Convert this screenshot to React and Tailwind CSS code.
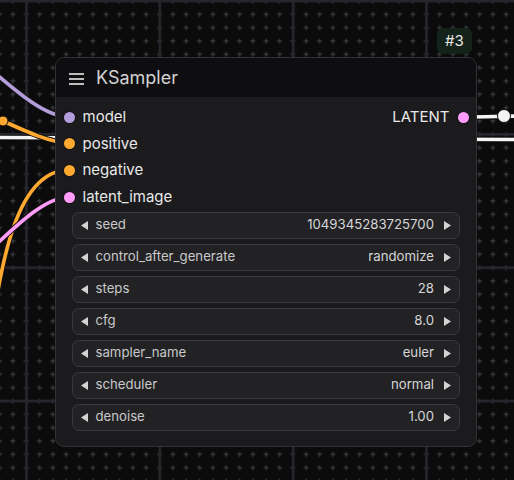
import React from 'react'

const INPUTS = [
  { name: 'model', color: 'bg-[#b39ddb]' },
  { name: 'positive', color: 'bg-[#ffa931]' },
  { name: 'negative', color: 'bg-[#ffa931]' },
  { name: 'latent_image', color: 'bg-[#ff9cf9]' },
]

const WIDGETS = [
  { label: 'seed', value: '1049345283725700' },
  { label: 'control_after_generate', value: 'randomize' },
  { label: 'steps', value: '28' },
  { label: 'cfg', value: '8.0' },
  { label: 'sampler_name', value: 'euler' },
  { label: 'scheduler', value: 'normal' },
  { label: 'denoise', value: '1.00' },
]

function Wire({ d, color }) {
  return (
    <g>
      <path d={d} fill="none" stroke="#111" strokeWidth="5.5" strokeLinecap="round" />
      <path d={d} fill="none" stroke={color} strokeWidth="3.6" strokeLinecap="round" />
    </g>
  )
}

function Canvas() {
  return (
    <svg className="absolute inset-0 h-full w-full" viewBox="0 0 514 480">
      <defs>
        <pattern id="dots" patternUnits="userSpaceOnUse" width="13.333" height="13.333" x="6.17" y="7.67">
          <path d="M6.67 4.17v5M4.17 6.67h5" stroke="#44464c" strokeWidth="1" />
        </pattern>
        <pattern id="grid" patternUnits="userSpaceOnUse" width="133.333" height="133.333" x="25.2" y="-0.3">
          <rect x="0" y="0" width="2.6" height="133.333" fill="#25272c" />
          <rect x="0" y="0" width="133.333" height="2.6" fill="#25272c" />
        </pattern>
      </defs>
      <rect width="514" height="480" fill="#0b0b0c" />
      <rect width="514" height="480" fill="url(#dots)" />
      <rect width="514" height="480" fill="url(#grid)" />

      <Wire d="M0 137.5 L514 139.5" color="#f4f4f4" />
      <Wire d="M-90 20 C-43.5 20 22.5 117 69 117" color="#b39ddb" />
      <Wire d="M-63 99 C-28 99 34 143 69 143" color="#ffa931" />
      <circle cx="3" cy="121" r="5" fill="#ffa931" stroke="#111" strokeWidth="1" />
      <Wire d="M-100 600 C15 600 -46 170 69 170" color="#ffa931" />
      <Wire d="M-80 295 C-36 295 25 197 69 197" color="#ff9cf9" />
      <Wire d="M463 117 C490 117 500 116 530 116" color="#f4f4f4" />
      <circle cx="504" cy="116" r="6.5" fill="#f4f4f4" stroke="#111" strokeWidth="1" />
    </svg>
  )
}

function Arrow({ dir }) {
  return (
    <svg width="7" height="9" viewBox="0 0 7 9" className="shrink-0">
      <polygon points={dir === 'left' ? '7,0 7,9 0,4.5' : '0,0 0,9 7,4.5'} fill="#d4d4d4" />
    </svg>
  )
}

function Widget({ label, value }) {
  return (
    <div className="flex h-[27px] items-center rounded-[7px] border border-[#3a3a3e] bg-[#222225] pl-[8px] pr-[8px] text-[13.2px]">
      <Arrow dir="left" />
      <span className="ml-[7.5px] text-[#c9c9c9]">{label}</span>
      <span className="ml-auto mr-[10px] text-[#d6d6d6]">{value}</span>
      <Arrow dir="right" />
    </div>
  )
}

function Node() {
  return (
    <div className="absolute left-[55px] top-[57px] h-[390px] w-[422px] overflow-hidden rounded-[9px] border border-[#333336] bg-[#1b1b1d]">
      <div className="flex h-[39px] items-center bg-[#0e0e10] pl-[13px]">
        <div className="flex w-[15px] flex-col gap-[3.5px] pt-[3px]">
          <span className="h-[1.5px] bg-[#bdbdbd]" />
          <span className="h-[1.5px] bg-[#bdbdbd]" />
          <span className="h-[1.5px] bg-[#bdbdbd]" />
        </div>
        <span className="ml-[12px] text-[18px] text-[#d2d2d2]">KSampler</span>
      </div>

      <div className="flex pt-[6.8px]">
        <div className="flex flex-col pl-[7.5px]">
          {INPUTS.map((inp) => (
            <div key={inp.name} className="flex h-[26.67px] items-center gap-[8px]">
              <span className={`h-[11px] w-[11px] shrink-0 rounded-full shadow-[0_0_0_1px_#141414] ${inp.color}`} />
              <span className="text-[15px] text-[#e8e8e8]">{inp.name}</span>
            </div>
          ))}
        </div>
        <div className="ml-auto flex h-[26.67px] items-center gap-[8px] pr-[7.5px]">
          <span className="text-[15px] text-[#e8e8e8]">LATENT</span>
          <span className="h-[11px] w-[11px] shrink-0 rounded-full bg-[#ff9cf9] shadow-[0_0_0_1px_#141414]" />
        </div>
      </div>

      <div className="mt-[1.2px] flex flex-col gap-[5px] px-[16px]">
        {WIDGETS.map((w) => (
          <Widget key={w.label} label={w.label} value={w.value} />
        ))}
      </div>
    </div>
  )
}

export default function App() {
  return (
    <div className="relative h-[480px] w-[514px] overflow-hidden bg-[#0b0b0c] font-['Inter',sans-serif]">
      <Canvas />
      <Node />
      <div className="absolute left-[437px] top-[28px] flex h-[26px] w-[35px] items-center justify-center rounded-[6px] bg-[#14231a] text-[15px] text-[#e6e6e6]">
        #3
      </div>
    </div>
  )
}
